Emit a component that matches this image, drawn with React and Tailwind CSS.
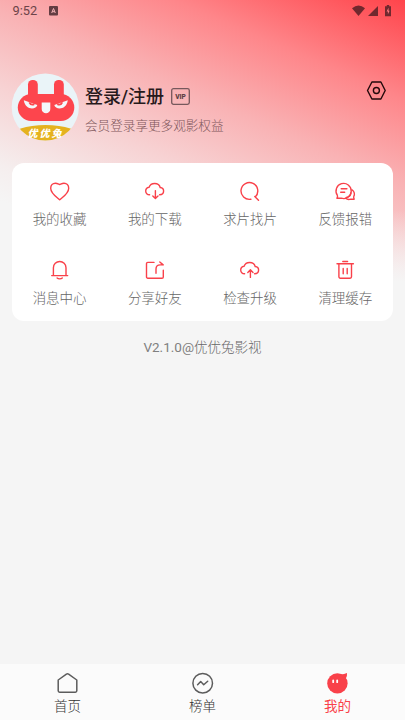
import React from "react";

const RED = "#f9414a";

function Stroke({ children, size = 22, color = RED, width = 1.4 }) {
  return (
    <svg
      width={size}
      height={size}
      viewBox="0 0 22 22"
      fill="none"
      stroke={color}
      strokeWidth={width}
      strokeLinecap="round"
      strokeLinejoin="round"
    >
      {children}
    </svg>
  );
}

const HeartIcon = () => (
  <Stroke>
    <path d="M10.7 19.8 C8.4 17.6 1.7 13.6 1.7 8.2 C1.7 5.2 3.8 3.2 6.4 3.2 C8.3 3.2 9.6 4.2 10.7 4.6 C11.8 4.2 13.1 3.2 15 3.2 C17.6 3.2 19.7 5.2 19.7 8.2 C19.7 13.6 13 17.6 10.7 19.8 Z" />
  </Stroke>
);

const CLOUD = "M5.6 14.8 C3.2 14.8 1.7 13.2 1.7 11.1 C1.7 8.9 3.2 7.6 5.1 7.3 C6 4.6 8.1 3.5 10.7 3.5 C13.6 3.5 15.6 5 16.2 7.5 C18.3 7.7 19.6 9.2 19.6 11.1 C19.6 13.2 18 14.8 15.6 14.8";

const CloudDownIcon = () => (
  <Stroke>
    <path d={CLOUD} />
    <path d="M11.4 10.6 V18.4 M8.8 16.1 L11.4 18.6 L14 16.1" />
  </Stroke>
);

const CloudUpIcon = () => (
  <Stroke>
    <path d={CLOUD} />
    <path d="M11.4 18.4 V11 M8.8 13.4 L11.4 10.8 L14 13.4" />
  </Stroke>
);

const SearchIcon = () => (
  <Stroke>
    <path d="M11.9 19.2 A8.4 8.4 0 1 1 16.4 16.8 M15.8 16.4 L19.5 20.2" />
  </Stroke>
);

const FeedbackIcon = () => (
  <Stroke>
    <path d="M2.9 18.2 C3.7 17.2 3.8 16.4 3.3 15.2 A7.6 7.6 0 1 1 7.2 18.2 Z" />
    <path d="M7.2 8.8 H12.9 M6.7 12.2 H10.7" />
    <path d="M18 9.8 C20.4 11.2 21 14.4 19.8 16.4 C19.4 17.2 19.8 18 20.2 19.2 H16.8 C14.8 19.9 12.8 19.4 11.6 18 M16.8 13 C16.6 15.6 14.6 17 12.8 17.2" />
  </Stroke>
);

const BellIcon = () => (
  <Stroke>
    <path d="M2.7 16.6 H18.7 M4.4 16.4 V8.8 A6.3 6.3 0 0 1 17 8.8 V16.4" />
    <path d="M8.1 19 C9.4 20.1 12.1 20.1 13.3 19" />
  </Stroke>
);

const ShareIcon = () => (
  <Stroke>
    <path d="M10 3.4 H3.8 A1.3 1.3 0 0 0 2.5 4.7 V17.9 A1.3 1.3 0 0 0 3.8 19.2 H18 A1.3 1.3 0 0 0 19.3 17.9 V11.2" />
    <path d="M12 14.2 V10 C12 7 13.6 5.9 16.2 5.9 H19 M15.8 3 L19.2 5.9" />
  </Stroke>
);

const TrashIcon = () => (
  <Stroke>
    <path d="M3 4.7 H19.4 M8.8 2.5 H13.6 M4.9 5 V17.8 A1.4 1.4 0 0 0 6.3 19.2 H16.1 A1.4 1.4 0 0 0 17.5 17.8 V5" />
    <path d="M9.2 9.4 V14.8 M13.2 9.4 V14.8" />
  </Stroke>
);

const MENU = [
  { label: "我的收藏", Icon: HeartIcon },
  { label: "我的下载", Icon: CloudDownIcon },
  { label: "求片找片", Icon: SearchIcon },
  { label: "反馈报错", Icon: FeedbackIcon },
  { label: "消息中心", Icon: BellIcon },
  { label: "分享好友", Icon: ShareIcon },
  { label: "检查升级", Icon: CloudUpIcon },
  { label: "清理缓存", Icon: TrashIcon },
];

const HomeIcon = () => (
  <Stroke color="#5c5c5c" width={1.5}>
    <path d="M1.2 8 L9.4 2.2 Q10.5 1.5 11.6 2.2 L19.8 8 V18.8 Q19.8 20.2 18.4 20.2 H2.6 Q1.2 20.2 1.2 18.8 Z" />
  </Stroke>
);

const RankIcon = () => (
  <Stroke color="#5c5c5c" width={1.5}>
    <circle cx="10.7" cy="11.2" r="9.8" />
    <path d="M5.6 12.8 L8.7 9.6 L11.7 12.7 L15.7 9.2" />
  </Stroke>
);

const MineIcon = () => (
  <svg width="22" height="22" viewBox="0 0 22 22">
    <circle cx="10.4" cy="11.4" r="10.2" fill={RED} />
    <path d="M12 2.3 Q16.5 2.8 20 1 Q20.6 3.8 18.4 7.5 Z" fill={RED} />
    <path d="M6.2 8.3 V10.2 M10.2 8.3 V10.2" stroke="#fff" strokeWidth="1.8" strokeLinecap="round" />
  </svg>
);

const TABS = [
  { label: "首页", Icon: HomeIcon },
  { label: "榜单", Icon: RankIcon },
  { label: "我的", Icon: MineIcon, active: true },
];

function StatusBar() {
  return (
    <div className="flex h-[22px] items-center pl-[12.5px] pr-3 text-[#6c4348]">
      <span className="pt-px font-[Roboto] text-[12.8px] leading-none">9:52</span>
      <svg className="ml-[11.5px]" width="9" height="10" viewBox="0 0 9 10">
        <rect width="9" height="9.5" rx="1" fill="#633d42" />
        <path d="M2.7 7 L4.5 2.5 L6.3 7 M3.3 5.7 H5.7" stroke="#f6b5b9" fill="none" />
      </svg>
      <svg className="ml-auto" width="41" height="12" viewBox="0 0 41 12" fill="#70282e">
        <path d="M0 3.2 Q6.5 -2 13 3.2 L6.5 11 Z" />
        <path d="M26 1 V11 H16 Z" />
        <path d="M33 1.2 H34.8 V0 H37.2 V1.2 H39 V11.2 H33 Z" />
        <path d="M36.5 2.8 L34.6 6.4 H35.9 V9.2 L37.6 5.7 H36.5 Z" fill="#ff7a80" />
      </svg>
    </div>
  );
}

function Avatar() {
  return (
    <svg width="68" height="68" viewBox="0 0 68 68" className="shrink-0">
      <defs>
        <clipPath id="avatar">
          <circle cx="34.3" cy="34" r="33.6" />
        </clipPath>
      </defs>
      <g clipPath="url(#avatar)">
        <rect width="68" height="68" fill="#eaf4f8" />
        <rect x="17" y="7" width="9.8" height="24" rx="4.6" fill="#fd454d" />
        <rect x="43" y="7" width="9.8" height="24" rx="4.6" fill="#fd454d" />
        <rect x="6.8" y="21" width="56.5" height="27" rx="13.5" fill="#fd454d" />
        <path d="M12.8 27.2 L26.3 32 C25.3 36.8 14.3 37.6 12.8 27.2 Z" fill="#f3f7fa" />
        <path d="M56.8 27.2 L43.3 32 C44.3 36.8 55.3 37.6 56.8 27.2 Z" fill="#f3f7fa" />
        <path d="M18.3 29.4 Q19.8 32.7 23.3 31.2 M51.3 29.4 Q49.8 32.7 46.3 31.2" fill="none" stroke="#fd454d" strokeWidth="1.8" />
        <path d="M30.7 29.5 H39.3 V36 A4.3 4.3 0 0 1 30.7 36 Z" fill="#f3f7fa" />
        <ellipse cx="34.5" cy="64" rx="35" ry="12" fill="#e5b21f" />
      </g>
      <text
        x="16.5"
        y="64.4"
        fill="#fff"
        fontSize="10"
        fontWeight="900"
        fontStyle="italic"
        letterSpacing="2"
        fontFamily="Noto Sans CJK SC, sans-serif"
      >
        优优兔
      </text>
    </svg>
  );
}

function Profile() {
  return (
    <div className="flex h-[141px] px-[11px] pt-[51px]">
      <Avatar />
      <div className="ml-1.5 flex-1 pt-[11px]">
        <div className="flex items-center">
          <span className="text-[18px] font-medium leading-[26px] text-[#27191b]">登录/注册</span>
          <svg className="mb-0.5 ml-[7px]" width="19" height="17" viewBox="0 0 19 17">
            <rect x="0.7" y="0.7" width="17.6" height="15.6" rx="1.8" fill="none" stroke="#76585c" strokeWidth="1.3" />
            <text x="9.5" y="11" textAnchor="middle" fill="#5d4145" fontSize="6.6" fontWeight="900" fontFamily="Roboto, sans-serif">
              VIP
            </text>
          </svg>
        </div>
        <div className="mt-[6px] text-[12.6px] font-light leading-5 text-[#80575c]">会员登录享更多观影权益</div>
      </div>
      <svg className="mr-2 mt-[8px]" width="20" height="19" viewBox="0 0 20 19" fill="none" stroke="#24090b" strokeWidth="1.4" strokeLinejoin="round">
        <path d="M5.9 1 H14.9 L19.2 9.5 L14.9 18 H5.9 L1.5 9.5 Z" />
        <circle cx="10.4" cy="9.5" r="3" />
      </svg>
    </div>
  );
}

export default function App() {
  return (
    <div className="flex h-[720px] w-[405px] flex-col overflow-hidden bg-[linear-gradient(180deg,#f5f5f500_210px,#f5f5f5_282px),linear-gradient(203.4deg,#ff444b_0px,#fe868a_92px,#f9b2b4_170px,#f7d2d3_240px,#f5eeee_312px,#f5f5f5_345px)] font-['Roboto','Noto_Sans_CJK_SC',sans-serif]">
      <StatusBar />
      <Profile />

      <div className="mx-3 grid h-[158px] grid-cols-4 rounded-xl bg-white">
        {MENU.map(({ label, Icon }) => (
          <div key={label} className="flex flex-col items-center pt-[17px]">
            <Icon />
            <span className="mt-[7px] text-[13.5px] font-light leading-5 text-[#666666]">{label}</span>
          </div>
        ))}
      </div>

      <div className="mt-4 text-center text-[13.5px] leading-5 text-[#808080]">
        V2.1.0@<span className="font-light text-[#666666]">优优兔影视</span>
      </div>

      <div className="mt-auto grid h-14 grid-cols-3 bg-[#fbfbfb]">
        {TABS.map(({ label, Icon, active }) => (
          <div key={label} className="flex flex-col items-center pt-2">
            <Icon />
            <span className={`mt-0.5 text-[13.5px] leading-5 ${active ? "font-normal text-[#f9414a]" : "font-light text-[#333333]"}`}>{label}</span>
          </div>
        ))}
      </div>
    </div>
  );
}
